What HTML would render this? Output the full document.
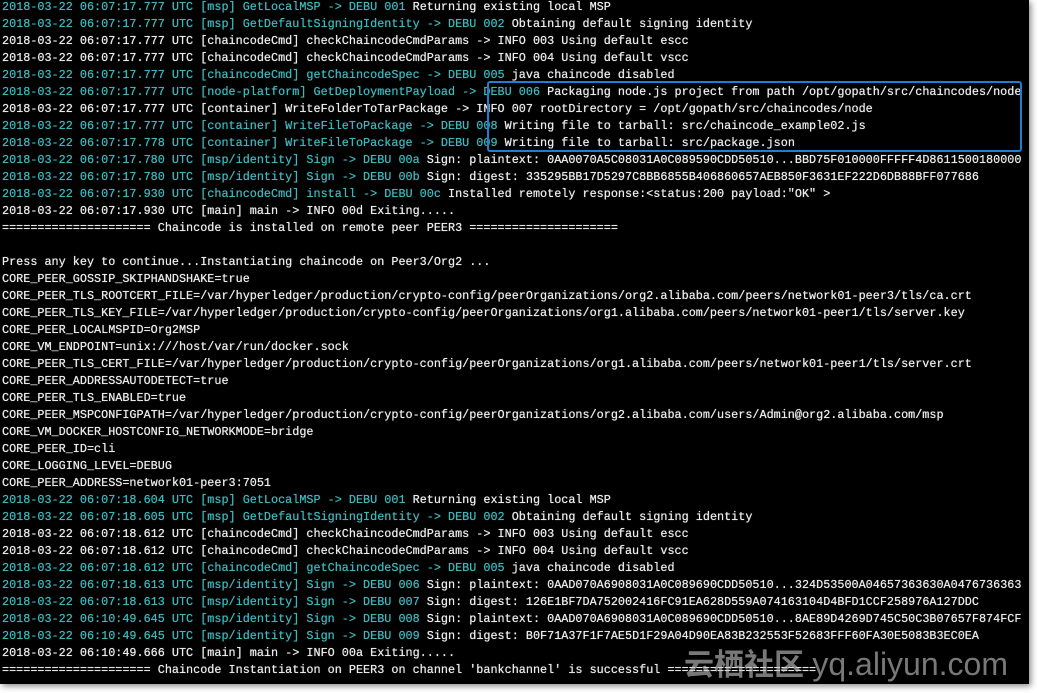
<!DOCTYPE html>
<html><head><meta charset="utf-8"><style>
html,body{margin:0;padding:0;background:#fff;width:1039px;height:693px;overflow:hidden}
#t{position:absolute;left:0;top:0;width:1029px;height:684px;background:#000;box-shadow:2px 2px 6px #888;overflow:hidden}
pre{margin:0;position:absolute;left:2px;top:-1px;font-family:"Liberation Mono",monospace;font-size:11.8px;line-height:17px;color:#ececec;white-space:pre;text-shadow:0 0 0.6px #fff}
.c{color:#3fb8bd;text-shadow:0 0 0.6px #3fb8bd}
#box{position:absolute;left:487px;top:81px;width:531px;height:67px;border:2.5px solid #1e7fd0;border-radius:3px}
#wm{position:absolute;left:684px;top:646px;font-family:"Liberation Sans","Noto Sans CJK SC",sans-serif;font-size:30px;line-height:36px;color:rgba(200,200,200,0.6);white-space:nowrap;font-weight:bold}
#wm span{font-weight:normal;font-size:32px}
</style></head><body><div id="t"><pre><span class="c">2018-03-22 06:07:17.777 UTC [msp] GetLocalMSP -> DEBU 001</span> Returning existing local MSP
<span class="c">2018-03-22 06:07:17.777 UTC [msp] GetDefaultSigningIdentity -> DEBU 002</span> Obtaining default signing identity
2018-03-22 06:07:17.777 UTC [chaincodeCmd] checkChaincodeCmdParams -> INFO 003 Using default escc
2018-03-22 06:07:17.777 UTC [chaincodeCmd] checkChaincodeCmdParams -> INFO 004 Using default vscc
<span class="c">2018-03-22 06:07:17.777 UTC [chaincodeCmd] getChaincodeSpec -> DEBU 005</span> java chaincode disabled
<span class="c">2018-03-22 06:07:17.777 UTC [node-platform] GetDeploymentPayload -> DEBU 006</span> Packaging node.js project from path /opt/gopath/src/chaincodes/node
2018-03-22 06:07:17.777 UTC [container] WriteFolderToTarPackage -> INFO 007 rootDirectory = /opt/gopath/src/chaincodes/node
<span class="c">2018-03-22 06:07:17.777 UTC [container] WriteFileToPackage -> DEBU 008</span> Writing file to tarball: src/chaincode_example02.js
<span class="c">2018-03-22 06:07:17.778 UTC [container] WriteFileToPackage -> DEBU 009</span> Writing file to tarball: src/package.json
<span class="c">2018-03-22 06:07:17.780 UTC [msp/identity] Sign -> DEBU 00a</span> Sign: plaintext: 0AA0070A5C08031A0C089590CDD50510...BBD75F010000FFFFF4D8611500180000
<span class="c">2018-03-22 06:07:17.780 UTC [msp/identity] Sign -> DEBU 00b</span> Sign: digest: 335295BB17D5297C8BB6855B406860657AEB850F3631EF222D6DB88BFF077686
<span class="c">2018-03-22 06:07:17.930 UTC [chaincodeCmd] install -> DEBU 00c</span> Installed remotely response:&lt;status:200 payload:"OK" &gt;
2018-03-22 06:07:17.930 UTC [main] main -> INFO 00d Exiting.....
===================== Chaincode is installed on remote peer PEER3 =====================

Press any key to continue...Instantiating chaincode on Peer3/Org2 ...
CORE_PEER_GOSSIP_SKIPHANDSHAKE=true
CORE_PEER_TLS_ROOTCERT_FILE=/var/hyperledger/production/crypto-config/peerOrganizations/org2.alibaba.com/peers/network01-peer3/tls/ca.crt
CORE_PEER_TLS_KEY_FILE=/var/hyperledger/production/crypto-config/peerOrganizations/org1.alibaba.com/peers/network01-peer1/tls/server.key
CORE_PEER_LOCALMSPID=Org2MSP
CORE_VM_ENDPOINT=unix:///host/var/run/docker.sock
CORE_PEER_TLS_CERT_FILE=/var/hyperledger/production/crypto-config/peerOrganizations/org1.alibaba.com/peers/network01-peer1/tls/server.crt
CORE_PEER_ADDRESSAUTODETECT=true
CORE_PEER_TLS_ENABLED=true
CORE_PEER_MSPCONFIGPATH=/var/hyperledger/production/crypto-config/peerOrganizations/org2.alibaba.com/users/Admin@org2.alibaba.com/msp
CORE_VM_DOCKER_HOSTCONFIG_NETWORKMODE=bridge
CORE_PEER_ID=cli
CORE_LOGGING_LEVEL=DEBUG
CORE_PEER_ADDRESS=network01-peer3:7051
<span class="c">2018-03-22 06:07:18.604 UTC [msp] GetLocalMSP -> DEBU 001</span> Returning existing local MSP
<span class="c">2018-03-22 06:07:18.605 UTC [msp] GetDefaultSigningIdentity -> DEBU 002</span> Obtaining default signing identity
2018-03-22 06:07:18.612 UTC [chaincodeCmd] checkChaincodeCmdParams -> INFO 003 Using default escc
2018-03-22 06:07:18.612 UTC [chaincodeCmd] checkChaincodeCmdParams -> INFO 004 Using default vscc
<span class="c">2018-03-22 06:07:18.612 UTC [chaincodeCmd] getChaincodeSpec -> DEBU 005</span> java chaincode disabled
<span class="c">2018-03-22 06:07:18.613 UTC [msp/identity] Sign -> DEBU 006</span> Sign: plaintext: 0AAD070A6908031A0C089690CDD50510...324D53500A04657363630A0476736363
<span class="c">2018-03-22 06:07:18.613 UTC [msp/identity] Sign -> DEBU 007</span> Sign: digest: 126E1BF7DA752002416FC91EA628D559A074163104D4BFD1CCF258976A127DDC
<span class="c">2018-03-22 06:10:49.645 UTC [msp/identity] Sign -> DEBU 008</span> Sign: plaintext: 0AAD070A6908031A0C089690CDD50510...8AE89D4269D745C50C3B07657F874FCF
<span class="c">2018-03-22 06:10:49.645 UTC [msp/identity] Sign -> DEBU 009</span> Sign: digest: B0F71A37F1F7AE5D1F29A04D90EA83B232553F52683FFF60FA30E5083B3EC0EA
2018-03-22 06:10:49.666 UTC [main] main -> INFO 00a Exiting.....
===================== Chaincode Instantiation on PEER3 on channel 'bankchannel' is successful =====================</pre>
<div id="box"></div>
<div id="wm">云栖社区 <span>yq.aliyun.com</span></div>
</div></body></html>
